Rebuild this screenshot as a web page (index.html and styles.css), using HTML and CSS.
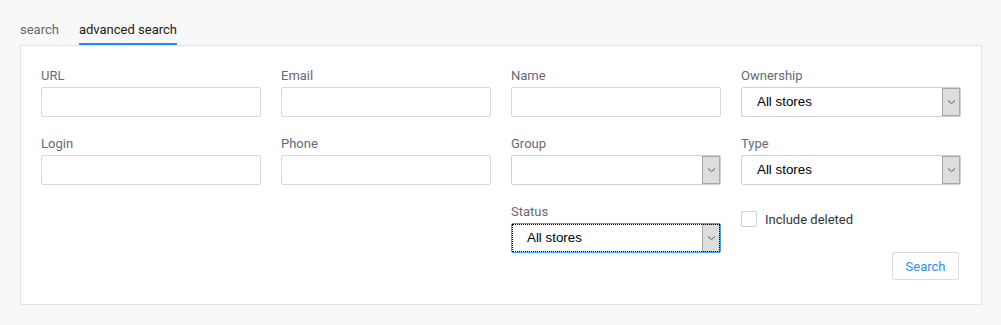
FILE: index.html
```html
<!DOCTYPE html>
<html>
<head>
<meta charset="utf-8">
<link rel="stylesheet" href="styles.css">
</head>
<body>
<div class="page">
  <div class="tabs">
    <div class="tab">search</div>
    <div class="tab active">advanced search</div>
  </div>
  <div class="panel">
    <div class="grid">
      <div class="field">
        <label class="label">URL</label>
        <div class="input"></div>
      </div>
      <div class="field">
        <label class="label">Email</label>
        <div class="input"></div>
      </div>
      <div class="field">
        <label class="label">Name</label>
        <div class="input"></div>
      </div>
      <div class="field">
        <label class="label">Ownership</label>
        <div class="select"><span class="value">All stores</span><span class="arrow"><svg width="9" height="6" viewBox="0 0 9 6"><path d="M1 1.5 L4.5 4.5 L8 1.5" fill="none" stroke="#555" stroke-width="1"/></svg></span></div>
      </div>

      <div class="field">
        <label class="label">Login</label>
        <div class="input"></div>
      </div>
      <div class="field">
        <label class="label">Phone</label>
        <div class="input"></div>
      </div>
      <div class="field">
        <label class="label">Group</label>
        <div class="select"><span class="value"></span><span class="arrow"><svg width="9" height="6" viewBox="0 0 9 6"><path d="M1 1.5 L4.5 4.5 L8 1.5" fill="none" stroke="#555" stroke-width="1"/></svg></span></div>
      </div>
      <div class="field">
        <label class="label">Type</label>
        <div class="select"><span class="value">All stores</span><span class="arrow"><svg width="9" height="6" viewBox="0 0 9 6"><path d="M1 1.5 L4.5 4.5 L8 1.5" fill="none" stroke="#555" stroke-width="1"/></svg></span></div>
      </div>

      <div class="field"></div>
      <div class="field"></div>
      <div class="field">
        <label class="label">Status</label>
        <div class="select focused"><span class="value">All stores</span><span class="arrow"><svg width="9" height="6" viewBox="0 0 9 6"><path d="M1 1.5 L4.5 4.5 L8 1.5" fill="none" stroke="#555" stroke-width="1"/></svg></span></div>
      </div>
      <div class="field extra">
        <div class="check-row">
          <span class="checkbox"></span>
          <span class="check-label">Include deleted</span>
        </div>
        <div class="actions">
          <button class="btn">Search</button>
        </div>
      </div>
    </div>
  </div>
</div>
</body>
</html>
```
FILE: styles.css
```css
html, body {
  margin: 0;
  padding: 0;
  background: #f8f8f8;
  font-family: Roboto, "Liberation Sans", Arial, sans-serif;
}

.page {
  padding: 20px 19px 20px 20px;
}

.tabs {
  display: flex;
  gap: 20px;
}

.tab {
  font-size: 13px;
  line-height: 17px;
  padding: 1px 0 5px;
  color: #666;
  border-bottom: 2px solid transparent;
}

.tab.active {
  color: #1a1a1a;
  border-bottom-color: #1e8fff;
}

.panel {
  background: #fff;
  border: 1px solid #e3e3e3;
  padding: 21px 19px 24px 20px;
}

.grid {
  display: grid;
  grid-template-columns: 220px 210px 210px 220px;
  column-gap: 20px;
  row-gap: 18px;
}

.field {
  display: flex;
  flex-direction: column;
}

.label {
  font-size: 13px;
  line-height: 17px;
  color: #666a75;
  margin-bottom: 3px;
}

.input {
  height: 30px;
  box-sizing: border-box;
  border: 1px solid #d9d9d9;
  border-radius: 2px;
  background: #fff;
}

.select {
  height: 30px;
  box-sizing: border-box;
  border: 1px solid #d0d0d0;
  border-radius: 2px;
  background: #fff;
  display: flex;
  align-items: stretch;
  padding: 0;
}

.select .value {
  flex: 1;
  font-family: "Liberation Sans", Arial, sans-serif;
  font-size: 13.33px;
  line-height: 28px;
  color: #000;
  padding-left: 15px;
}

.select .arrow {
  width: 16px;
  background: #dddddd;
  border: 1px solid #a8a8a8;
  display: flex;
  align-items: center;
  justify-content: center;
}

.select.focused {
  border-color: #4a9ff5;
  outline: 1px dotted #000;
  outline-offset: -2px;
}

.extra {
  padding-top: 7px;
}

.check-row {
  display: flex;
  align-items: center;
  gap: 8px;
}

.checkbox {
  width: 16px;
  height: 16px;
  box-sizing: border-box;
  border: 1px solid #d0d0d0;
  border-radius: 2px;
  background: #fff;
}

.check-label {
  font-size: 13px;
  line-height: 16px;
  padding-top: 2px;
  color: #333;
}

.actions {
  display: flex;
  justify-content: flex-end;
  margin-top: 24px;
  padding-right: 2px;
}

.btn {
  height: 28px;
  width: 67px;
  box-sizing: border-box;
  border: 1px solid #dcdcdc;
  border-radius: 2px;
  background: #fff;
  color: #2f8ff0;
  font-family: Roboto, "Liberation Sans", Arial, sans-serif;
  font-size: 13px;
  padding: 0;
}
```
